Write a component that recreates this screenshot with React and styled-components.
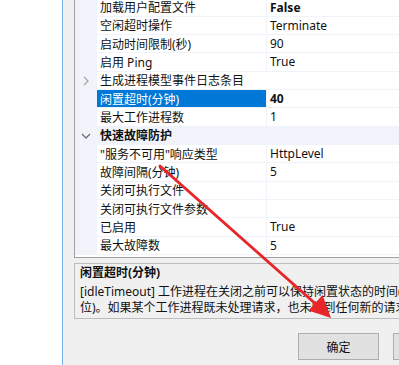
import React from "react";
import styled, { createGlobalStyle } from "styled-components";

const Global = createGlobalStyle`
  html, body { margin: 0; padding: 0; background: #ffffff; }
  body { font-family: "Noto Sans", "Noto Sans CJK SC", sans-serif; }
`;

const ROW_H = 18.33;
const LINE = "#f0f3f9";

const Screen = styled.div`
  width: 399px;
  height: 365px;
  overflow: hidden;
  display: flex;
  position: relative;
  background: #ffffff;
`;

const DesktopStrip = styled.div`
  width: 62px;
  flex: none;
  background: #ffffff;
`;

const Window = styled.div`
  flex: none;
  width: 420px;
  border-left: 1px solid #74b2ee;
  background: #f0f0f0;
  padding-left: 11px;
  display: flex;
  flex-direction: column;
`;

const Grid = styled.div`
  margin-top: -2.67px;
  width: 400px;
  border: 1px solid #a0a0a0;
  background: #ffffff;
  padding-bottom: 2px;
  display: flex;
  flex-direction: column;
`;

const Row = styled.div`
  height: ${ROW_H}px;
  display: grid;
  grid-template-columns: 22px 169px 1px 1fr;
  align-items: stretch;
  font-size: 12px;
  color: #111;
  background: ${(p) => (p.$category ? LINE : "#ffffff")};
`;

const Margin = styled.div`
  background: ${LINE};
  display: flex;
  align-items: center;
  justify-content: center;
`;

const NameCell = styled.div`
  grid-column: ${(p) => (p.$span ? "2 / 5" : "2 / 3")};
  display: flex;
  align-items: center;
  padding-left: 3px;
  white-space: nowrap;
  overflow: hidden;
  font-weight: ${(p) => (p.$bold ? 700 : 400)};
  background: ${(p) => (p.$selected ? "#0078d7" : "transparent")};
  color: ${(p) => (p.$selected ? "#ffffff" : "#111111")};
  border-bottom: 1px solid ${LINE};
  box-sizing: border-box;
`;

const Divider = styled.div`
  background: ${LINE};
`;

const ValueCell = styled.div`
  display: flex;
  align-items: center;
  padding-left: 3px;
  white-space: nowrap;
  font-weight: ${(p) => (p.$bold ? 700 : 400)};
  border-bottom: 1px solid ${LINE};
  box-sizing: border-box;
`;

const Description = styled.div`
  margin-top: 5px;
  width: 400px;
  height: 56px;
  box-sizing: border-box;
  border: 1px solid #bcbcbc;
  padding: 0 5px;
  font-size: 12px;
  color: #111;
  overflow: hidden;
`;

const DescTitle = styled.div`
  font-weight: 700;
  line-height: 16px;
  white-space: nowrap;
  margin-top: 1px;
  margin-bottom: 3px;
`;

const DescLine = styled.div`
  line-height: 16px;
  white-space: nowrap;
`;

const ButtonRow = styled.div`
  margin-top: 14px;
  padding-left: 224px;
  display: flex;
  gap: 14px;
`;

const Button = styled.button`
  flex: none;
  width: 81px;
  height: 27px;
  background: #e1e1e1;
  border: 1px solid #adadad;
  font-family: "Noto Sans CJK SC", sans-serif;
  font-size: 12px;
  color: #111;
  padding: 0;
`;

const Overlay = styled.svg`
  position: absolute;
  left: 0;
  top: 0;
  pointer-events: none;
`;

const Chevron = ({ open }) =>
  open ? (
    <svg width="10" height="6" viewBox="0 0 10 6">
      <path d="M1 1 L5 5 L9 1" fill="none" stroke="#6e6e6e" strokeWidth="1.3" />
    </svg>
  ) : (
    <svg width="6" height="10" viewBox="0 0 6 10">
      <path d="M1 1 L5 5 L1 9" fill="none" stroke="#a6a6a6" strokeWidth="1.3" />
    </svg>
  );

const rows = [
  { name: "加载用户配置文件", value: "False", bold: true },
  { name: "空闲超时操作", value: "Terminate" },
  { name: "启动时间限制(秒)", value: "90" },
  { name: "启用 Ping", value: "True" },
  { name: "生成进程模型事件日志条目", expander: true, span: true },
  { name: "闲置超时(分钟)", value: "40", bold: true, selected: true },
  { name: "最大工作进程数", value: "1" },
  { category: "快速故障防护" },
  { name: '"服务不可用"响应类型', value: "HttpLevel" },
  { name: "故障间隔(分钟)", value: "5" },
  { name: "关闭可执行文件", value: "" },
  { name: "关闭可执行文件参数", value: "" },
  { name: "已启用", value: "True" },
  { name: "最大故障数", value: "5" },
];

export default function App() {
  return (
    <>
      <Global />
      <Screen>
        <DesktopStrip />
        <Window>
          <Grid>
            {rows.map((r, i) =>
              r.category ? (
                <Row key={i} $category>
                  <Margin>
                    <Chevron open />
                  </Margin>
                  <NameCell $span $bold>
                    {r.category}
                  </NameCell>
                </Row>
              ) : (
                <Row key={i}>
                  <Margin>{r.expander && <Chevron />}</Margin>
                  <NameCell $span={r.span} $selected={r.selected}>
                    {r.name}
                  </NameCell>
                  {!r.span && <Divider />}
                  {!r.span && <ValueCell $bold={r.bold}>{r.value}</ValueCell>}
                </Row>
              )
            )}
          </Grid>
          <Description>
            <DescTitle>闲置超时(分钟)</DescTitle>
            <DescLine>[idleTimeout] 工作进程在关闭之前可以保持闲置状态的时间(以分钟为单</DescLine>
            <DescLine>位)。如果某个工作进程既未处理请求，也未收到任何新的请求，则该进程将被视为闲置。</DescLine>
          </Description>
          <ButtonRow>
            <Button>确定</Button>
            <Button>取消</Button>
          </ButtonRow>
        </Window>
        <Overlay width="399" height="365" viewBox="0 0 399 365">
          <line x1="160" y1="166" x2="318" y2="306" stroke="#e8262a" strokeWidth="3" strokeLinecap="round" />
          <polygon points="331,318 308.5,310.5 322.5,295" fill="#e8262a" />
        </Overlay>
      </Screen>
    </>
  );
}
